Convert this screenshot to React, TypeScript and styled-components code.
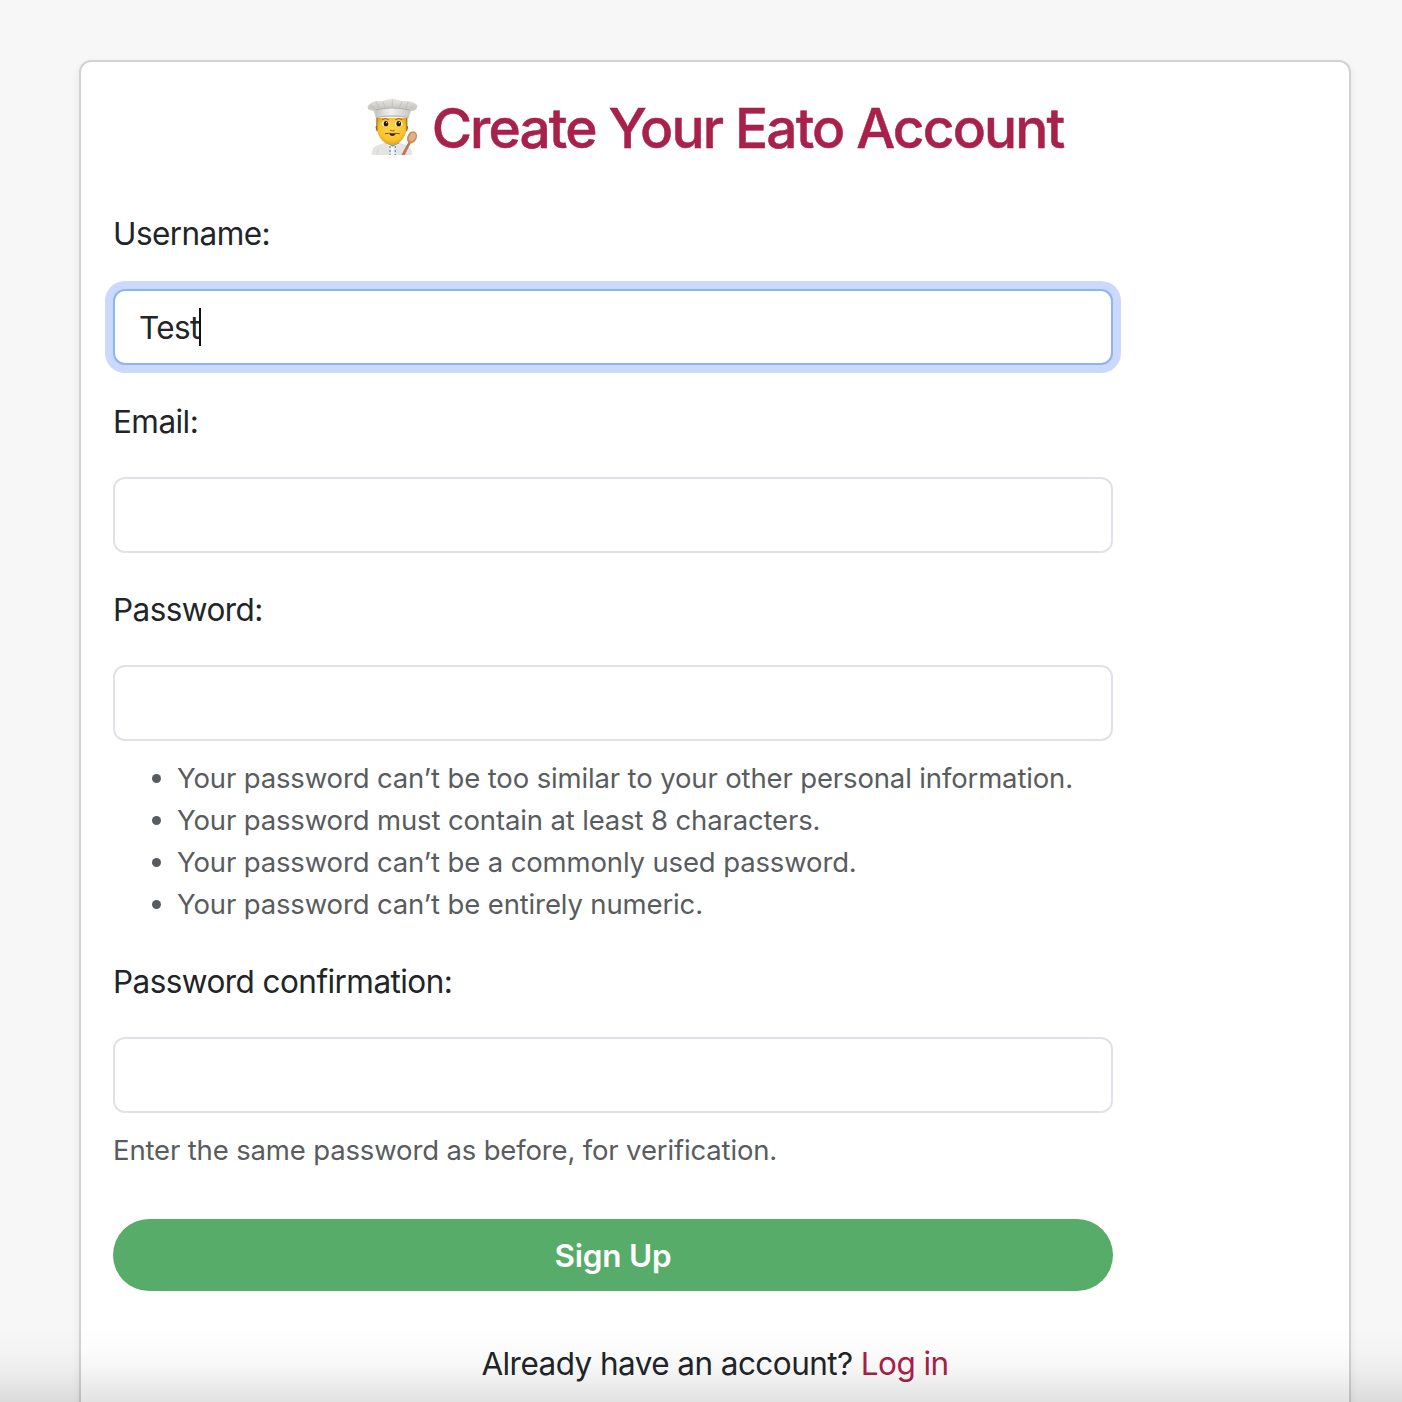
import React from "react";
import styled, { createGlobalStyle } from "styled-components";

const GlobalStyle = createGlobalStyle`
  *, *::before, *::after { box-sizing: border-box; }
  html, body { margin: 0; background: #f7f7f7; }
  body {
    height: 1402px;
    overflow: hidden;
    font-family: Inter, "Liberation Sans", sans-serif;
    color: #212529;
  }
`;

const Page = styled.main`
  position: relative;
  height: 1402px;
  overflow: hidden;
  padding: 60px 51px 0 79px;
`;

const Card = styled.section`
  height: 1440px;
  padding: 32px;
  background: #fff;
  border: 2px solid #d2d2d2;
  border-radius: 12px;
  box-shadow: 0 4px 8px rgba(0, 0, 0, 0.075);
`;

const Title = styled.h2`
  display: flex;
  align-items: center;
  justify-content: center;
  gap: 13px;
  height: 67px;
  margin: 0 0 48px;
  font-size: 55px;
  font-weight: 500;
  line-height: 67px;
  letter-spacing: -1.85px;
  white-space: nowrap;
  color: #a8214a;
  -webkit-text-stroke: 0.5px #a8214a;
`;

const TitleText = styled.span`
  padding-top: 2px;
`;

const ChefSvg = styled.svg`
  width: 52px;
  height: 57px;
  flex: none;
  margin-top: -2px;
`;

const Form = styled.form`
  display: flex;
  flex-direction: column;
  width: 1000px;
`;

const Field = styled.div<{ $gap: number }>`
  display: flex;
  flex-direction: column;
  margin-bottom: ${(p) => p.$gap}px;
`;

const Label = styled.label`
  height: 48px;
  margin-bottom: 32px;
  font-size: 31.5px;
  line-height: 50px;
  letter-spacing: -0.56px;
`;

const Control = styled.div`
  position: relative;
  display: flex;
`;

const Input = styled.input<{ $active?: boolean }>`
  width: 100%;
  height: 76px;
  padding: 0 24px;
  border: 2px solid ${(p) => (p.$active ? "#8bb4fa" : "#dfe2e6")};
  border-radius: 12px;
  outline: none;
  background: #fff;
  box-shadow: ${(p) => (p.$active ? "0 0 0 8px #cad9fd" : "none")};
  font: inherit;
  font-size: 31.5px;
  letter-spacing: -0.6px;
  color: inherit;
`;

const Caret = styled.span`
  position: absolute;
  left: 86px;
  top: 19px;
  width: 2px;
  height: 38px;
  background: #111;
`;

const Rules = styled.ul`
  margin: 16px 0 0;
  padding: 0 0 0 64px;
  font-size: 27.5px;
  line-height: 42px;
  letter-spacing: -0.14px;
  white-space: nowrap;
  color: #595c5f;
`;

const Hint = styled.p`
  margin: 16px 0 0;
  font-size: 27.5px;
  line-height: 42px;
  letter-spacing: -0.15px;
  color: #595c5f;
`;

const Submit = styled.button`
  height: 72px;
  border: 0;
  border-radius: 36px;
  background: #56ac68;
  color: #fff;
  font: inherit;
  font-size: 31.5px;
  font-weight: 600;
  letter-spacing: -0.2px;
`;

const Footer = styled.p`
  margin: 49px 0 0;
  font-size: 31.5px;
  line-height: 48px;
  letter-spacing: -0.56px;
  text-align: center;
`;

const Link = styled.a`
  color: #a8214a;
  text-decoration: none;
`;

const Fade = styled.div`
  position: absolute;
  left: 0;
  right: 0;
  bottom: 0;
  height: 76px;
  pointer-events: none;
  background: linear-gradient(
    to bottom,
    rgba(0, 0, 0, 0) 0%,
    rgba(0, 0, 0, 0.012) 30%,
    rgba(0, 0, 0, 0.04) 58%,
    rgba(0, 0, 0, 0.115) 100%
  );
`;

function Chef() {
  return (
    <ChefSvg viewBox="36 24 156 171" aria-hidden="true">
      <defs>
        <linearGradient id="hat" x1="0" y1="0" x2="0" y2="1">
          <stop offset="0" stopColor="#e9e8e5" />
          <stop offset="0.5" stopColor="#c9c8c4" />
          <stop offset="1" stopColor="#dddcd8" />
        </linearGradient>
        <linearGradient id="band" x1="0" y1="0" x2="1" y2="0">
          <stop offset="0" stopColor="#c6c5c2" />
          <stop offset="0.45" stopColor="#f3f2f0" />
          <stop offset="1" stopColor="#c9c8c5" />
        </linearGradient>
        <radialGradient id="skin" cx="0.5" cy="0.4" r="0.65">
          <stop offset="0" stopColor="#ffd94a" />
          <stop offset="0.65" stopColor="#f8c32f" />
          <stop offset="1" stopColor="#d99a1b" />
        </radialGradient>
      </defs>
      <g strokeLinecap="butt" stroke="none">
        <path d="M50 195 C51 174 59 168 76 163 L99 155 H127 L151 164 C164 169 171 177 172 195 Z" fill="#e4e4e3" />
        <path d="M65 195 L70 174 M155 195 L151 175" stroke="#cfcfce" strokeWidth="2" />
        <path d="M96 150 H130 V161 L113 173 L96 161 Z" fill="#d7991e" />
        <path d="M96 156 L112 164 L129 156 L132 164 L117 171 V195 H108 V171 L93 163 Z" fill="#f5f6f8" />
        <path d="M94 159 L107 164 L113 168 L120 164 L132 159" fill="none" stroke="#6b98d4" strokeWidth="4" />
        <path d="M105 169 V195 M121 169 V195" stroke="#4779bd" strokeWidth="4" strokeDasharray="4 8" />
        <path d="M64 84 H157 V108 C160 108 160 114 156 124 H65 C61 114 61 108 64 108 Z" fill="#916224" />
        <path d="M67 84 H154 V119 C152 144 132 165 111 165 C90 165 69 144 67 119 Z" fill="url(#skin)" />
        <path d="M81 89 Q91 82 101 89 M121 89 Q132 82 142 89" fill="none" stroke="#98651c" strokeWidth="3" />
        <ellipse cx="92" cy="101" rx="11" ry="8" fill="#fff6d5" />
        <ellipse cx="131" cy="101" rx="11" ry="8" fill="#fff6d5" />
        <ellipse cx="93" cy="101" rx="7" ry="8" fill="#25180f" />
        <ellipse cx="131" cy="101" rx="7" ry="8" fill="#25180f" />
        <circle cx="95" cy="98" r="2" fill="#fff" />
        <circle cx="133" cy="98" r="2" fill="#fff" />
        <path d="M105 120 Q112 125 119 120" fill="none" stroke="#c5791c" strokeWidth="4" />
        <path d="M90 131 Q101 129 112 131 Q124 129 134 131" fill="none" stroke="#8c4f18" strokeWidth="3" />
        <path d="M103 131 H122 Q119 138 112 138 Q105 138 103 131" fill="#3f2010" />
        <path d="M61 82 C57 67 57 63 53 62 C42 61 37 57 38 50 C44 37 62 31 83 34 C94 24 128 23 140 34 C160 31 181 36 187 47 C186 58 177 64 168 63 L162 82 Z" fill="url(#hat)" />
        <path d="M61 60 C84 51 139 51 164 60 L161 83 C140 77 83 77 63 84 Z" fill="url(#band)" />
        <path d="M61 60 Q112 48 164 60" fill="none" stroke="#9d9c99" strokeWidth="2" />
        <path d="M62 34 L73 54 M82 34 L91 52 M112 29 V51 M141 34 L133 52 M160 36 L151 54 M45 44 L62 57 M180 43 L165 57" fill="none" stroke="#aaa9a5" strokeWidth="2.5" opacity="0.55" />
        <path d="M63 83 Q112 72 161 83" fill="none" stroke="#b3b1ac" strokeWidth="3" />
        <path d="M139 195 L162 153 L169 156 L149 195 Z" fill="#bb7850" />
        <ellipse cx="171" cy="142" rx="14" ry="19" transform="rotate(27 171 142)" fill="#c98b61" />
        <ellipse cx="172" cy="141" rx="9" ry="13" transform="rotate(27 172 141)" fill="#e4b184" />
      </g>
    </ChefSvg>
  );
}

export default function App() {
  return (
    <>
      <GlobalStyle />
      <Page>
        <Card>
          <Title>
            <Chef />
            <TitleText>Create Your Eato Account</TitleText>
          </Title>
          <Form>
            <Field $gap={32}>
              <Label htmlFor="username">Username:</Label>
              <Control>
                <Input id="username" defaultValue="Test" $active />
                <Caret />
              </Control>
            </Field>
            <Field $gap={32}>
              <Label htmlFor="email">Email:</Label>
              <Input id="email" type="email" />
            </Field>
            <Field $gap={32}>
              <Label htmlFor="password">Password:</Label>
              <Input id="password" type="password" />
              <Rules>
                <li>Your password can’t be too similar to your other personal information.</li>
                <li>Your password must contain at least 8 characters.</li>
                <li>Your password can’t be a commonly used password.</li>
                <li>Your password can’t be entirely numeric.</li>
              </Rules>
            </Field>
            <Field $gap={48}>
              <Label htmlFor="confirm">Password confirmation:</Label>
              <Input id="confirm" type="password" />
              <Hint>Enter the same password as before, for verification.</Hint>
            </Field>
            <Submit type="button">Sign Up</Submit>
          </Form>
          <Footer>
            Already have an account? <Link>Log in</Link>
          </Footer>
        </Card>
        <Fade />
      </Page>
    </>
  );
}
